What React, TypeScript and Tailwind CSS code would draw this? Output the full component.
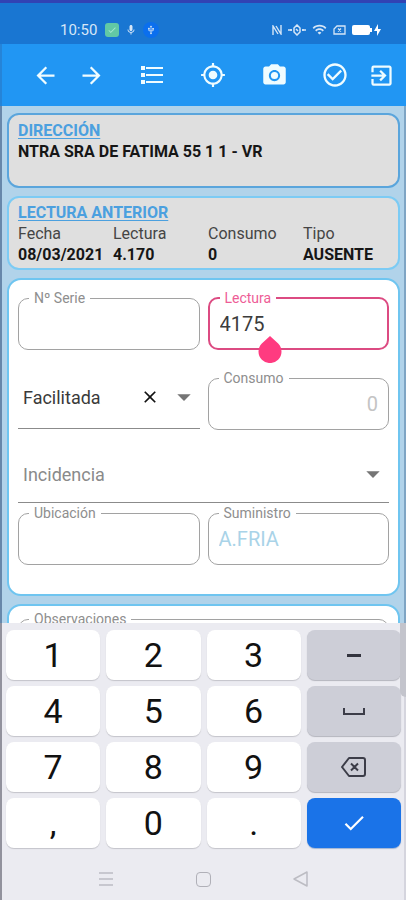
import { useState, type ReactNode } from "react";
import {
  MdArrowBack,
  MdArrowForward,
  MdArrowDropDown,
  MdCheck,
  MdClose,
  MdExitToApp,
  MdMyLocation,
  MdPhotoCamera,
  MdCheckCircleOutline,
  MdMic,
  MdUsb,
  MdWifi,
} from "react-icons/md";

function StatusBar() {
  return (
    <div className="flex h-11 items-center border-t-[3px] border-[#3142b4] bg-[#1976d2] pt-3 pr-6 pl-[60px] text-[#d6e6f7]">
      <span className="text-[15px] leading-5">10:50</span>
      <span className="ml-2 flex size-[14px] items-center justify-center rounded-[3px] bg-[#62c9a5]">
        <MdCheck className="size-[10px] text-[#a5ead0]" />
      </span>
      <MdMic className="ml-[6px] size-3" />
      <span className="ml-[6px] flex size-4 items-center justify-center rounded-full bg-[#0b6fee]">
        <MdUsb className="size-[10px]" />
      </span>
      <div className="ml-auto flex items-center gap-[6px]">
        <svg className="h-[10px] w-[10px]" viewBox="0 0 10 10" fill="none" stroke="currentColor" strokeWidth="1.4">
          <path d="M1 10V1l5 8M4 1l5 8V0" />
        </svg>
        <svg className="h-3 w-[18px]" viewBox="0 0 18 12" fill="none" stroke="currentColor" strokeWidth="1.5">
          <path d="M0 6h4M14 6h4M6 4l3-3 3 3v4l-3 3-3-3zM3 5v2M15 5v2M8 5l2 2" />
        </svg>
        <MdWifi className="size-[15px]" />
        <svg className="h-[10px] w-[13px]" viewBox="0 0 13 10" fill="none" stroke="currentColor" strokeWidth="1.3">
          <path d="M4 1h8v8H1V4zM5 3.500l3 3M8 3.500l-3 3" />
        </svg>
        <svg className="h-3 w-[30px]" viewBox="0 0 30 12" fill="#fff">
          <rect x="0" y="1" width="18" height="10" rx="2" />
          <rect x="18" y="4" width="2" height="4" />
          <path d="M26 0l-4 7h3v5l4-7h-3z" />
        </svg>
      </div>
    </div>
  );
}

function BarButton({ label, children }: { label: string; children: ReactNode }) {
  return (
    <button type="button" aria-label={label} className="flex h-12 w-[46px] items-center justify-center">
      {children}
    </button>
  );
}

function AppBar() {
  return (
    <header className="flex h-[62px] items-center justify-between border-l-2 border-[#2584d8] bg-[#2196f3] pr-[2px] pl-5 text-[#effcff]">
      <div className="flex">
        <BarButton label="Atrás"><MdArrowBack className="size-[27px]" /></BarButton>
        <BarButton label="Siguiente"><MdArrowForward className="size-[27px]" /></BarButton>
      </div>
      <BarButton label="Lista">
        <svg className="h-[18px] w-[22px]" viewBox="0 0 22 18" fill="currentColor">
          <path d="M0 0h4v4H0zM0 7h4v4H0zM0 14h4v4H0zM5 1h17v2H5zM5 8h17v2H5zM5 15h17v2H5z" />
        </svg>
      </BarButton>
      <BarButton label="Ubicar"><MdMyLocation className="size-[26px]" /></BarButton>
      <BarButton label="Foto"><MdPhotoCamera className="size-[27px]" /></BarButton>
      <div className="flex">
        <BarButton label="Confirmar"><MdCheckCircleOutline className="size-[28px]" /></BarButton>
        <BarButton label="Salir"><MdExitToApp className="size-[27px]" /></BarButton>
      </div>
    </header>
  );
}

function Field({
  id,
  label,
  active = false,
  children,
}: {
  id: string;
  label: string;
  active?: boolean;
  children: ReactNode;
}) {
  return (
    <fieldset
      className={`relative h-[60px] min-w-0 rounded-[10px] px-[10px] ${
        active ? "border-2 border-[#dc4b82]" : "border border-[#a2a2a2]"
      }`}
    >
      <legend className="h-4 px-[5px]">
        <label
          htmlFor={id}
          className={`block text-[14px] leading-4 ${active ? "text-[#ee5c96]" : "text-[#8e8e8e]"}`}
        >
          {label}
        </label>
      </legend>
      {children}
    </fieldset>
  );
}

const previous = [
  ["Fecha", "08/03/2021"],
  ["Lectura", "4.170"],
  ["Consumo", "0"],
  ["Tipo", "AUSENTE"],
];

function ReadingForm() {
  const [serial, setSerial] = useState("");
  const [reading, setReading] = useState("4175");
  const [kind, setKind] = useState("Facilitada");
  const [place, setPlace] = useState("");
  return (
    <form className="grid shrink-0 grid-cols-2 gap-x-2 rounded-[14px] border-2 border-[#6fc5f0] bg-white px-[9px] pt-[10px] pb-[29px]">
      <Field id="serie" label="Nº Serie">
        <input
          id="serie"
          value={serial}
          onChange={(e) => setSerial(e.target.value)}
          className="block h-9 w-full text-[20px] text-[#3c3c3c] outline-none"
        />
      </Field>
      <Field id="lectura" label="Lectura" active>
        <input
          id="lectura"
          inputMode="decimal"
          value={reading}
          onChange={(e) => setReading(e.target.value)}
          className="block h-9 w-full text-[20px] text-[#3c3c3c] outline-none"
        />
        <svg className="absolute top-[30px] left-[48px] h-[27px] w-6" viewBox="0 0 24 27" fill="#ff3b80">
          <path d="M12 0l8.200 7.500a11.500 11.500 0 1 1-16.400 0z" />
        </svg>
      </Field>

      <div className="mt-5 flex h-[59px] items-center border-b border-[#8b8b8b] pb-1 pl-[5px]">
        <select
          aria-label="Tipo de lectura"
          value={kind}
          onChange={(e) => setKind(e.target.value)}
          className="h-8 min-w-0 flex-1 appearance-none text-[18px] text-[#3a3a3a] outline-none"
        >
          <option value="Facilitada">Facilitada</option>
          <option value="" />
        </select>
        <button type="button" aria-label="Borrar" onClick={() => setKind("")} className="flex w-5 justify-center text-[#111]">
          <MdClose className="size-5" />
        </button>
        <MdArrowDropDown className="ml-2 size-8 text-[#757575]" />
      </div>
      <div className="mt-5">
        <Field id="consumo" label="Consumo">
          <input
            id="consumo"
            disabled
            value="0"
            className="block h-9 w-full text-right text-[20px] text-[#c4c4c4]"
          />
        </Field>
      </div>

      <div className="col-span-2 mb-[2px] flex h-[73px] items-center border-b border-[#8b8b8b] pt-4 pl-[5px]">
        <select
          aria-label="Incidencia"
          defaultValue=""
          className="h-8 min-w-0 flex-1 appearance-none text-[18px] text-[#8a8a8a] outline-none"
        >
          <option value="">Incidencia</option>
        </select>
        <MdArrowDropDown className="size-8 text-[#757575]" />
      </div>

      <Field id="ubicacion" label="Ubicación">
        <input
          id="ubicacion"
          value={place}
          onChange={(e) => setPlace(e.target.value)}
          className="block h-9 w-full text-[20px] text-[#3c3c3c] outline-none"
        />
      </Field>
      <Field id="suministro" label="Suministro">
        <input
          id="suministro"
          disabled
          value="A.FRIA"
          className="block h-9 w-full text-[20px] text-[#a9d3e8]"
        />
      </Field>
    </form>
  );
}

const whiteKey = "flex h-[50px] items-center justify-center rounded-lg bg-white text-[34px] text-[#111] shadow-[0_1px_1px_#c4c4ca]";
const grayKey = "flex h-[50px] items-center justify-center rounded-lg bg-[#cdced7] text-[#3c3d48] shadow-[0_1px_1px_#b4b5bd]";

function Keyboard() {
  const digit = (d: string) => (
    <button type="button" className={whiteKey}>{d}</button>
  );
  return (
    <div className="relative shrink-0 border-x-2 border-l-[#92929d] border-r-[#d5d5de] bg-[#ebebf1]">
      <div className="grid grid-cols-4 gap-[6px] pt-[7px] pr-[3px] pl-1">
        {digit("1")}
        {digit("2")}
        {digit("3")}
        <button type="button" aria-label="Menos" className={grayKey}>
          <span className="h-[3px] w-[14px] bg-[#33343e]" />
        </button>
        {digit("4")}
        {digit("5")}
        {digit("6")}
        <button type="button" aria-label="Espacio" className={grayKey}>
          <svg className="h-[7px] w-[22px]" viewBox="0 0 22 7" fill="none" stroke="currentColor" strokeWidth="2">
            <path d="M1 0v6h20V0" />
          </svg>
        </button>
        {digit("7")}
        {digit("8")}
        {digit("9")}
        <button type="button" aria-label="Retroceso" className={grayKey}>
          <svg className="h-[20px] w-[25px]" viewBox="0 0 25 20" fill="none" stroke="currentColor" strokeWidth="2" strokeLinejoin="round">
            <path d="M8 1h14a2 2 0 0 1 2 2v14a2 2 0 0 1-2 2H8l-7-9zM10 6.500l7 7M17 6.500l-7 7" />
          </svg>
        </button>
        {digit(",")}
        {digit("0")}
        {digit(".")}
        <button
          type="button"
          aria-label="Aceptar"
          className="flex h-[50px] items-center justify-center rounded-lg bg-[#1a73e8] text-white shadow-[0_1px_1px_#9fb4d4]"
        >
          <MdCheck className="size-[26px]" />
        </button>
      </div>
      <nav className="flex h-[52px] items-center justify-center gap-[73px] pt-[10px] text-[#bcbcc3]">
        <button type="button" aria-label="Recientes" className="flex w-6 justify-center">
          <svg className="h-[14px] w-[14px]" viewBox="0 0 14 14" fill="none" stroke="currentColor" strokeWidth="1.500">
            <path d="M0 1h14M0 7h14M0 13h14" />
          </svg>
        </button>
        <button type="button" aria-label="Inicio" className="flex w-6 justify-center">
          <span className="size-[15px] rounded-[4px] border border-[#b0b0b8]" />
        </button>
        <button type="button" aria-label="Volver" className="flex w-6 justify-center">
          <svg className="h-[16px] w-[15px]" viewBox="0 0 15 16" fill="none" stroke="currentColor" strokeWidth="1.500" strokeLinejoin="round">
            <path d="M14 1v14L1 8z" />
          </svg>
        </button>
      </nav>
      <span className="absolute top-0 -right-[2px] h-[74px] w-[6px] rounded-bl-md bg-[#c3c4cc]" />
    </div>
  );
}

export default function App() {
  return (
    <div className="flex h-screen flex-col overflow-hidden bg-[#b1d3ea] font-[Roboto,sans-serif]">
      <StatusBar />
      <AppBar />
      <main className="flex min-h-0 flex-1 flex-col gap-2 overflow-hidden border-x-2 border-l-[#6787aa] border-r-[#7fa5c4] pt-[7px] pr-1 pl-[5px] text-[16px] leading-[21px]">
        <section className="h-[75px] shrink-0 rounded-[12px] border-2 border-[#5aa5dc] bg-[#dfdfdf] px-[9px] pt-[5px]">
          <h2 className="font-bold text-[#4ba0df] underline underline-offset-2">DIRECCIÓN</h2>
          <p className="font-bold text-[#161616]">NTRA SRA DE FATIMA 55 1 1 - VR</p>
        </section>
        <section className="h-[74px] shrink-0 rounded-[12px] border-2 border-[#7ccbf4] bg-[#dfdfdf] pt-1 pl-[9px]">
          <h2 className="font-bold text-[#4ba0df] underline underline-offset-2">LECTURA ANTERIOR</h2>
          <dl className="grid grid-cols-4">
            {previous.map(([name, value]) => (
              <div key={name}>
                <dt className="text-[#454545]">{name}</dt>
                <dd className="font-bold text-[#161616]">{value}</dd>
              </div>
            ))}
          </dl>
        </section>
        <ReadingForm />
        <section className="shrink-0 rounded-[14px] border-2 border-[#6fc5f0] bg-white px-[9px] pt-[5px] pb-3">
          <Field id="observaciones" label="Observaciones">
            <textarea id="observaciones" className="block h-8 w-full resize-none outline-none" />
          </Field>
        </section>
      </main>
      <Keyboard />
    </div>
  );
}
